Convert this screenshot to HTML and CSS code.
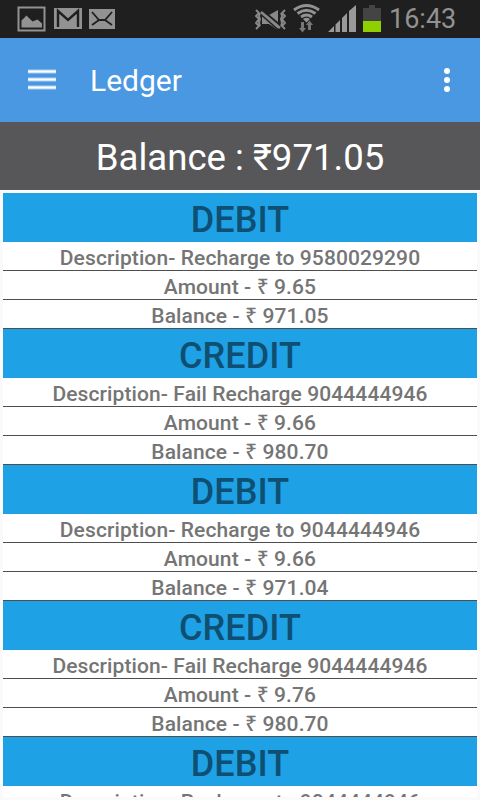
FILE: index.html
```html
<!DOCTYPE html>
<html lang="en">
<head>
    <meta charset="UTF-8">
    <meta name="viewport" content="width=device-width, initial-scale=1.0">
    <title>Ledger</title>
    <link rel="stylesheet" href="styles.css">
</head>
<body>
    <div class="status-bar">
        <svg class="status-left" width="130" height="38" viewBox="0 0 130 38">
            <rect x="18.5" y="7.500" width="26" height="23" fill="none" stroke="#929292" stroke-width="2"/>
            <path d="M21.500 27.500v-7l5-5 6 6 5-2 4.500 4v4z" fill="#929292"/>
            <rect x="54" y="8" width="28" height="21" fill="#929292"/>
            <path d="M58 27V11l10 9 10-9v16" fill="none" stroke="#1f1f1f" stroke-width="2.4"/>
            <rect x="89" y="9" width="26" height="20" fill="#929292"/>
            <path d="M92 12l7 8h6l7-8M92 25l7-5M112 25l-7-5" fill="none" stroke="#1f1f1f" stroke-width="1.8"/>
        </svg>
        <svg class="status-right" width="145" height="38" viewBox="240 0 145 38">
            <!-- vibrate / muted -->
            <path d="M262 15h7l9-5v20l-9-6h-7z" fill="#888"/>
            <path d="M261 9l20 17" stroke="#1f1f1f" stroke-width="2"/>
            <path d="M261 12l19 16" stroke="#888" stroke-width="2.600"/>
            <path d="M262 15.500l17 15" stroke="#1f1f1f" stroke-width="1.500"/>
            <path d="M256 10l3 3-3 3 3 3-3 4 3 3-3 3M260 13l-1 3 1 3-1 4 1 3M285 10l-3 3 3 3-3 3 3 4-3 3 3 3M281 13l1 3-1 3 1 4-1 3" fill="none" stroke="#888" stroke-width="1.9"/>
            <!-- wifi -->
            <path d="M294 10q12.500-9 25 0M297.500 13.500q9-6.500 18 0M301 17q5.500-4 11 0" fill="none" stroke="#929292" stroke-width="3"/>
            <path d="M303 19q3.500-2.500 7 0l-3.500 3.500z" fill="#929292"/>
            <path d="M301 22h3v6h2l-3.500 4.500-3.500-4.500h2zM308 30v-5h-2l3.500-4.500 3.500 4.500h-2v5z" fill="#777"/>
            <!-- signal -->
            <path d="M328 32l6-6v6zM335.500 24.500l4.500-4.500v12h-4.500zM342 18l5-5v19h-5zM349 11l7-6v27h-7z" fill="#999"/>
            <!-- battery -->
            <path d="M363 8h6V5h6v3h6v13h-18z" fill="#444"/>
            <rect x="363" y="21" width="18" height="11" fill="#8fd100"/>
        </svg>
        <span class="clock">16:43</span>
    </div>

    <div class="app-bar">
        <svg class="menu-icon" width="28" height="22" viewBox="0 0 28 22">
            <path d="M0 2.500h28M0 10.500h28M0 18.500h28" stroke="#a9d0f5" stroke-width="4"/>
            <path d="M0 2.500h28M0 10.500h28M0 18.500h28" stroke="#fff" stroke-width="2"/>
        </svg>
        <span class="title">Ledger</span>
        <svg class="more-icon" width="6" height="24" viewBox="0 0 6 24">
            <circle cx="3" cy="3" r="3"/>
            <circle cx="3" cy="12" r="3"/>
            <circle cx="3" cy="21" r="3"/>
        </svg>
    </div>

    <div class="balance">Balance : ₹971.05</div>

    <div class="list-wrap">
        <div class="list">
            <div class="entry">
                <div class="type">DEBIT</div>
                <div class="row">Description- Recharge to 9580029290</div>
                <div class="row">Amount - <span class="rupee">₹</span> 9.65</div>
                <div class="row">Balance - <span class="rupee">₹</span> 971.05</div>
            </div>
            <div class="entry">
                <div class="type">CREDIT</div>
                <div class="row">Description- Fail Recharge 9044444946</div>
                <div class="row">Amount - <span class="rupee">₹</span> 9.66</div>
                <div class="row">Balance - <span class="rupee">₹</span> 980.70</div>
            </div>
            <div class="entry">
                <div class="type">DEBIT</div>
                <div class="row">Description- Recharge to 9044444946</div>
                <div class="row">Amount - <span class="rupee">₹</span> 9.66</div>
                <div class="row">Balance - <span class="rupee">₹</span> 971.04</div>
            </div>
            <div class="entry">
                <div class="type">CREDIT</div>
                <div class="row">Description- Fail Recharge 9044444946</div>
                <div class="row">Amount - <span class="rupee">₹</span> 9.76</div>
                <div class="row">Balance - <span class="rupee">₹</span> 980.70</div>
            </div>
            <div class="entry">
                <div class="type">DEBIT</div>
                <div class="row">Description- Recharge to 9044444946</div>
            </div>
        </div>
    </div>
</body>
</html>
```

FILE: styles.css
```css
* {
    box-sizing: border-box;
}

body {
    margin: 0;
    height: 800px;
    display: flex;
    flex-direction: column;
    overflow: hidden;
    background-color: #fafafa;
    font-family: Roboto, "Noto Sans", sans-serif;
    white-space: nowrap;
}

.status-bar {
    height: 38px;
    flex: none;
    display: flex;
    background-color: #1f1f1f;
}

.status-right {
    margin-left: 110px;
}

.clock {
    margin-left: 4px;
    font-size: 27px;
    line-height: 38px;
    color: #929292;
}

.app-bar {
    height: 84px;
    flex: none;
    display: flex;
    align-items: center;
    padding: 0 30px 0 28px;
    background-color: #4a97e2;
    color: #fff;
}

.title {
    margin-left: 34px;
    font-size: 30px;
}

.more-icon {
    margin-left: auto;
    fill: #fff;
}

.balance {
    height: 68px;
    flex: none;
    line-height: 72px;
    text-align: center;
    background-color: #575759;
    color: #fff;
    font-size: 36.6px;
}

.list-wrap {
    flex: 1;
    min-height: 0;
    padding: 3px;
}

.list {
    height: 100%;
    overflow: hidden;
    background-color: #fff;
}

.type {
    height: 49px;
    line-height: 55px;
    text-align: center;
    background-color: #1fa1e6;
    color: #0f4f72;
    font-size: 36px;
    font-weight: 500;
    letter-spacing: 0.1px;
}

.row {
    height: 29px;
    line-height: 33px;
    text-align: center;
    border-bottom: 1px solid #4e4e4e;
    color: #757575;
    font-size: 21px;
    font-weight: 500;
    letter-spacing: 0.1px;
}

.rupee {
    font-family: "Noto Sans", sans-serif;
    line-height: 1;
}
```
